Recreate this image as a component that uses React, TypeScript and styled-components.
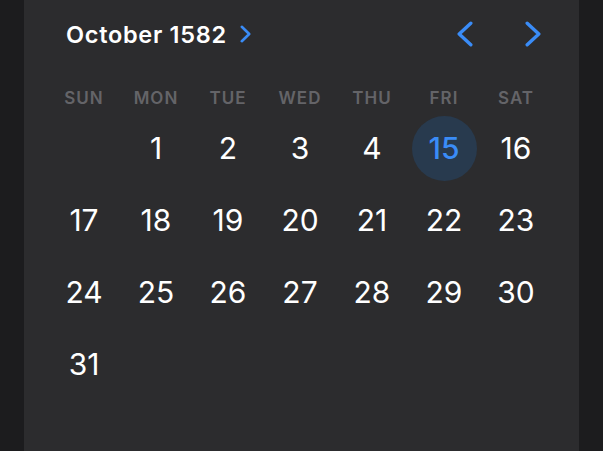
import styled, { createGlobalStyle } from 'styled-components'

const Global = createGlobalStyle`
  html, body {
    margin: 0;
    padding: 0;
    background: #1c1c1e;
    font-family: Inter, "Noto Sans", "Liberation Sans", sans-serif;
  }
`

const Page = styled.div`
  height: 451px;
  overflow: hidden;
  padding: 0 24px;
`

const Panel = styled.div`
  background: #2c2c2e;
  height: 451px;
  padding: 0 24px;
  box-sizing: border-box;
`

const Header = styled.div`
  height: 68px;
  display: flex;
  align-items: center;
  padding-left: 18px;
`

const Title = styled.div`
  display: flex;
  align-items: center;
  gap: 13px;
  color: #fff;
  font-size: 23.5px;
  font-weight: 600;
  letter-spacing: 0.7px;
`

const Nav = styled.div`
  margin-left: auto;
  margin-right: 14px;
  display: flex;
  gap: 52px;
`

const NavButton = styled.button`
  background: none;
  border: 0;
  padding: 0;
  width: 16px;
  height: 26px;
  display: flex;
  cursor: pointer;
`

const Grid = styled.div<{ $rows: number }>`
  display: grid;
  grid-template-columns: repeat(7, 72px);
  grid-auto-rows: ${(p) => (p.$rows === 1 ? '24px' : '72px')};
  justify-items: center;
  align-items: center;
`

const Weekdays = styled(Grid)`
  margin-top: 18px;
  margin-bottom: 2px;
`

const Weekday = styled.div`
  color: #646468;
  font-size: 17px;
  font-weight: 600;
  letter-spacing: 1px;
`

const Day = styled.div<{ $selected?: boolean }>`
  width: 65px;
  height: 65px;
  border-radius: 50%;
  display: flex;
  align-items: center;
  justify-content: center;
  font-size: 30px;
  font-weight: ${(p) => (p.$selected ? 500 : 400)};
  color: ${(p) => (p.$selected ? '#3a8cf7' : '#fff')};
  background: ${(p) => (p.$selected ? '#283a4e' : 'transparent')};
`

const Chevron = ({ dir, w, h, sw }: { dir: 'l' | 'r'; w: number; h: number; sw: number }) => {
  const pad = sw / 2 + 0.5
  const d =
    dir === 'l'
      ? `M${w - pad} ${pad} L${pad} ${h / 2} L${w - pad} ${h - pad}`
      : `M${pad} ${pad} L${w - pad} ${h / 2} L${pad} ${h - pad}`
  return (
    <svg width={w} height={h} viewBox={`0 0 ${w} ${h}`} fill="none">
      <path d={d} stroke="#3a8cf7" strokeWidth={sw} strokeLinecap="round" strokeLinejoin="round" />
    </svg>
  )
}

const days = ['SUN', 'MON', 'TUE', 'WED', 'THU', 'FRI', 'SAT']
// October 1582: the 1st is a Monday, the 5th–14th never happened
const dates = [1, 2, 3, 4, ...Array.from({ length: 17 }, (_, i) => i + 15)]

export default function App() {
  return (
    <Page>
      <Global />
      <Panel>
        <Header>
          <Title>
            October 1582
            <Chevron dir="r" w={11} h={18} sw={2.6} />
          </Title>
          <Nav>
            <NavButton>
              <Chevron dir="l" w={16} h={26} sw={3.4} />
            </NavButton>
            <NavButton>
              <Chevron dir="r" w={16} h={26} sw={3.4} />
            </NavButton>
          </Nav>
        </Header>
        <Weekdays $rows={1}>
          {days.map((d) => (
            <Weekday key={d}>{d}</Weekday>
          ))}
        </Weekdays>
        <Grid $rows={4}>
          <div />
          {dates.map((n) => (
            <Day key={n} $selected={n === 15}>
              {n}
            </Day>
          ))}
        </Grid>
      </Panel>
    </Page>
  )
}
